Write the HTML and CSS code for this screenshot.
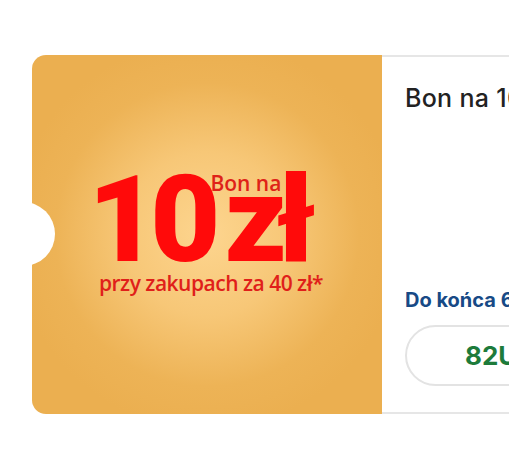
FILE: index.html
```html
<!DOCTYPE html>
<html lang="pl">
<head>
<meta charset="utf-8">
<link rel="stylesheet" href="styles.css">
</head>
<body>
<div class="page">
  <div class="voucher">
    <div class="coupon">
      <div class="headline">
        <span class="amount">10</span>
        <span class="unit-col">
          <span class="bon">Bon na</span>
          <span class="unit">zł</span>
        </span>
      </div>
      <div class="cond">przy zakupach za 40 zł*</div>
    </div>
    <div class="details">
      <div class="title">Bon na 10 zł</div>
      <div class="deadline">Do końca 6 dni</div>
      <div class="code">82UKX7QD</div>
    </div>
  </div>
</div>
</body>
</html>
```

FILE: styles.css
```css
html, body {
  margin: 0;
  padding: 0;
  background: #ffffff;
}
.page {
  width: 509px;
  height: 465px;
  overflow: hidden;
  padding: 55px 0 0 32px;
  box-sizing: border-box;
}
.voucher {
  display: flex;
  width: 640px;
  height: 359px;
}
.coupon {
  position: relative;
  width: 350px;
  flex: none;
  border-radius: 14px 0 0 14px;
  background: radial-gradient(ellipse 195px 195px at 50% 50%, #fdd58f 0%, #f7c777 42%, #edb356 78%, #ebaf50 100%);
  display: flex;
  flex-direction: column;
  align-items: center;
  padding-top: 113px;
  box-sizing: border-box;
  overflow: hidden;
}
.coupon::before {
  content: "";
  position: absolute;
  left: -41px;
  top: 147px;
  width: 64px;
  height: 64px;
  border-radius: 50%;
  background: #ffffff;
}
.headline {
  display: flex;
  align-items: flex-end;
  color: #ff0a0a;
  font-family: Roboto, "Liberation Sans", sans-serif;
  font-weight: 900;
  margin-left: -20px;
}
.amount {
  font-size: 121px;
  line-height: 104px;
  letter-spacing: -8px;
  display: block;
}
.unit-col {
  display: flex;
  flex-direction: column;
  margin-left: 2px;
}
.bon {
  font-family: "Open Sans", sans-serif;
  font-weight: 600;
  font-size: 21px;
  line-height: 19px;
  color: #df2218;
  letter-spacing: 0;
  margin-bottom: -25px;
  margin-left: -4px;
}
.unit {
  font-size: 121px;
  line-height: 104px;
  letter-spacing: -10px;
  margin-left: 10px;
}
.cond {
  font-family: "Open Sans", sans-serif;
  font-weight: 600;
  font-size: 21px;
  line-height: 24px;
  color: #e01f1a;
  margin-top: -1px;
  margin-left: 8px;
  letter-spacing: -0.5px;
}
.details {
  flex: 1;
  background: #ffffff;
  border-top: 2px solid #e6e6e6;
  border-bottom: 2px solid #e6e6e6;
  display: flex;
  flex-direction: column;
  padding: 26px 0 0 23px;
  box-sizing: border-box;
}
.title {
  font-family: Inter, sans-serif;
  font-weight: 500;
  font-size: 25px;
  line-height: 30px;
  letter-spacing: 0.3px;
  color: #222222;
}
.deadline {
  margin-top: 176px;
  font-family: Inter, sans-serif;
  font-weight: 700;
  font-size: 20px;
  line-height: 22px;
  color: #174a86;
}
.code {
  margin-top: 14px;
  width: 240px;
  height: 61px;
  box-sizing: border-box;
  border: 2px solid #e3e3e3;
  border-radius: 31px;
  font-family: Inter, sans-serif;
  font-weight: 700;
  font-size: 26px;
  color: #1d7b3b;
  display: flex;
  align-items: center;
  padding-left: 58px;
}
```
